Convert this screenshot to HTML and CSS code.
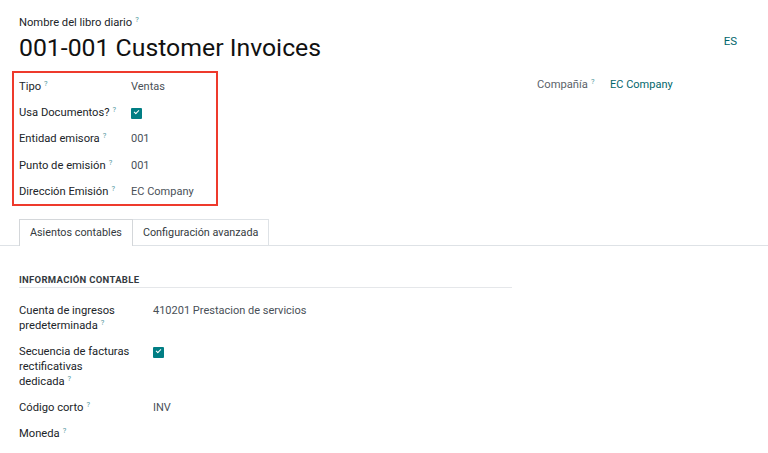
FILE: index.html
```html
<!DOCTYPE html>
<html lang="es">
<head>
    <meta charset="UTF-8">
    <meta name="viewport" content="width=device-width, initial-scale=1.0">
    <title>001-001 Customer Invoices</title>
    <link rel="stylesheet" href="styles.css">
</head>
<body>
    <div class="sheet">
        <div class="title-row">
            <div class="title-block">
                <div class="name-label">Nombre del libro diario<sup class="help">?</sup></div>
                <h1 class="journal-name">001-001 Customer Invoices</h1>
            </div>
            <a class="lang" href="#">ES</a>
        </div>

        <div class="top-groups">
            <div class="group-left">
                <div class="highlight">
                    <div class="field">
                        <div class="field-label">Tipo<sup class="help">?</sup></div>
                        <div class="field-value">Ventas</div>
                    </div>
                    <div class="field">
                        <div class="field-label">Usa Documentos?<sup class="help">?</sup></div>
                        <div class="field-value"><span class="checkbox"></span></div>
                    </div>
                    <div class="field">
                        <div class="field-label">Entidad emisora<sup class="help">?</sup></div>
                        <div class="field-value">001</div>
                    </div>
                    <div class="field">
                        <div class="field-label">Punto de emisión<sup class="help">?</sup></div>
                        <div class="field-value">001</div>
                    </div>
                    <div class="field">
                        <div class="field-label">Dirección Emisión<sup class="help">?</sup></div>
                        <div class="field-value">EC Company</div>
                    </div>
                </div>
            </div>
            <div class="group-right">
                <div class="field">
                    <div class="field-label muted">Compañía<sup class="help">?</sup></div>
                    <a class="field-value link" href="#">EC Company</a>
                </div>
            </div>
        </div>

        <div class="tabs">
            <div class="tab active">Asientos contables</div>
            <div class="tab">Configuración avanzada</div>
        </div>

        <div class="tab-body">
            <div class="section-title">INFORMACIÓN CONTABLE</div>
            <div class="inner-field">
                <div class="inner-label">Cuenta de ingresos predeterminada<sup class="help">?</sup></div>
                <div class="inner-value">410201 Prestacion de servicios</div>
            </div>
            <div class="inner-field">
                <div class="inner-label">Secuencia de facturas rectificativas dedicada<sup class="help">?</sup></div>
                <div class="inner-value"><span class="checkbox"></span></div>
            </div>
            <div class="inner-field">
                <div class="inner-label">Código corto<sup class="help">?</sup></div>
                <div class="inner-value">INV</div>
            </div>
            <div class="inner-field">
                <div class="inner-label">Moneda<sup class="help">?</sup></div>
                <div class="inner-value"></div>
            </div>
        </div>
    </div>
</body>
</html>
```

FILE: styles.css
```css
body {
    margin: 0;
    font-family: Roboto, "Noto Sans", sans-serif;
    font-size: 11.2px;
    color: #212529;
    background-color: #fff;
}

.sheet {
    padding-top: 15px;
}

.title-row {
    display: flex;
    justify-content: space-between;
    align-items: center;
    padding: 0 31px 0 19px;
}

.name-label {
    font-size: 11.2px;
    line-height: 15px;
}

.journal-name {
    margin: 2px 0 0 0;
    font-size: 24.8px;
    font-weight: 400;
    line-height: 32px;
    color: #111;
}

.lang {
    color: #01666b;
    text-decoration: none;
    font-size: 11.5px;
    margin-top: 2px;
}

.help {
    color: #4f969d;
    font-size: 7.5px;
    margin-left: 3px;
    vertical-align: 4px;
    line-height: 0;
}

.top-groups {
    display: flex;
    margin-top: 7px;
    padding-left: 19px;
}

.group-left {
    width: 518px;
}

.highlight {
    width: 192px;
    margin-left: -7px;
    padding: 0 5px;
    border: 2px solid #ee3a2c;
}

.field {
    display: flex;
    align-items: center;
    height: 26.3px;
}

.field-label {
    width: 112px;
}

.field-value {
    font-size: 11px;
    color: #495057;
}

.group-right .field-label {
    width: 73px;
}

.muted {
    color: #5c636a;
}

.link {
    color: #01666b;
    text-decoration: none;
}

.checkbox {
    display: inline-block;
    width: 11px;
    height: 11px;
    border-radius: 1px;
    background-color: #017e84;
    position: relative;
    vertical-align: middle;
}

.checkbox::after {
    content: "";
    position: absolute;
    left: 3px;
    top: 2px;
    width: 4px;
    height: 2px;
    border-left: 1.5px solid #fff;
    border-bottom: 1.5px solid #fff;
    transform: rotate(-45deg);
}

.tabs {
    display: flex;
    margin-top: 13px;
    padding-left: 19px;
    border-bottom: 1px solid #dee2e6;
}

.tab {
    height: 25px;
    line-height: 25px;
    padding: 0 10px;
    font-size: 10.8px;
    color: #343a40;
    border: 1px solid #dee2e6;
    border-bottom: none;
    margin-bottom: -1px;
    background-color: #fff;
}

.tab.active {
    height: 26px;
    border-color: #d4d7da;
}

.tab + .tab {
    border-left: none;
}

.tab-body {
    padding: 28px 19px 0 19px;
}

.section-title {
    width: 493px;
    font-size: 9.5px;
    font-weight: 700;
    letter-spacing: 0.3px;
    color: #343a40;
    padding-bottom: 2px;
    border-bottom: 1px solid #e5e7ea;
    margin-bottom: 15px;
}

.inner-field {
    display: flex;
    line-height: 15px;
    margin-bottom: 11px;
}

.inner-label {
    width: 116px;
    margin-right: 18px;
}

.inner-value {
    font-size: 11px;
    color: #495057;
}
```
